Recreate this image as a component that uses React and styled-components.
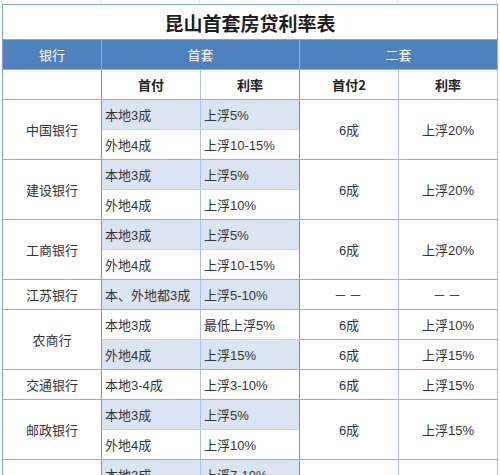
import React from "react";
import styled, { createGlobalStyle } from "styled-components";

const banks = [
  {
    name: "中国银行",
    rows: [
      { pay: "本地3成", rate: "上浮5%", shade: true },
      { pay: "外地4成", rate: "上浮10-15%" },
    ],
    pay2: "6成",
    rate2: "上浮20%",
  },
  {
    name: "建设银行",
    rows: [
      { pay: "本地3成", rate: "上浮5%", shade: true },
      { pay: "外地4成", rate: "上浮10%" },
    ],
    pay2: "6成",
    rate2: "上浮20%",
  },
  {
    name: "工商银行",
    rows: [
      { pay: "本地3成", rate: "上浮5%", shade: true },
      { pay: "外地4成", rate: "上浮10-15%" },
    ],
    pay2: "6成",
    rate2: "上浮20%",
  },
  {
    name: "江苏银行",
    rows: [{ pay: "本、外地都3成", rate: "上浮5-10%", shade: true }],
    pay2: "－－",
    rate2: "－－",
  },
  {
    name: "农商行",
    rows: [
      { pay: "本地3成", rate: "最低上浮5%", pay2: "6成", rate2: "上浮10%" },
      { pay: "外地4成", rate: "上浮15%", shade: true, pay2: "6成", rate2: "上浮15%" },
    ],
  },
  {
    name: "交通银行",
    rows: [{ pay: "本地3-4成", rate: "上浮3-10%" }],
    pay2: "6成",
    rate2: "上浮15%",
  },
  {
    name: "邮政银行",
    rows: [
      { pay: "本地3成", rate: "上浮5%", shade: true },
      { pay: "外地4成", rate: "上浮10%" },
    ],
    pay2: "6成",
    rate2: "上浮15%",
  },
  {
    // last group runs off the bottom of the view
    name: "",
    rows: [
      { pay: "本地3成", rate: "上浮7-10%", shade: true },
      { pay: "外地4成", rate: "上浮10%" },
    ],
    pay2: "",
    rate2: "",
  },
];

const GlobalStyle = createGlobalStyle`
  html, body {
    margin: 0;
    padding: 0;
    background: #ffffff;
    overflow: hidden;
  }
  body {
    font-family: "Liberation Sans", "Noto Sans CJK SC", sans-serif;
    color: #333;
  }
`;

const Page = styled.div`
  width: 500px;
  height: 475px;
  overflow: hidden;
  display: flex;
  flex-direction: column;
`;

const TopStrip = styled.div`
  height: 4px;
  flex: none;
  display: grid;
  grid-template-columns: 2px repeat(5, 99px) 1fr;
  & > span {
    border-right: 1px solid #e2e2e2;
  }
`;

const Table = styled.table`
  flex: none;
  margin-left: 2px;
  width: 496px;
  border-collapse: collapse;
  table-layout: fixed;
  border: 1px solid #7fa3d4;
`;

const TitleCell = styled.th`
  height: 34px;
  padding: 0;
  font-family: "Noto Sans CJK SC", sans-serif;
  font-size: 19px;
  font-weight: bold;
  color: #1e1e1e;
  text-align: center;
  border-bottom: 1px solid #7fa3d4;
`;

const HeadCell = styled.th`
  height: 29px;
  padding: 0;
  background: #4f81bd;
  color: #ffffff;
  font-family: "Noto Sans CJK SC", sans-serif;
  font-size: 13px;
  font-weight: normal;
  text-align: center;
  border-right: 1px solid #8fb0dc;
  border-bottom: 1px solid #8fb0dc;
`;

const SubCell = styled.th`
  height: 29px;
  padding: 0;
  background: #ffffff;
  color: #222;
  font-family: "Noto Sans CJK SC", sans-serif;
  font-size: 13px;
  font-weight: bold;
  text-align: center;
  border-right: 1px solid ${(p) => (p.$strong ? "#6e96cc" : "#a9c2e4")};
  border-bottom: 1px solid #8fb0dc;
`;

const Cell = styled.td`
  height: 29px;
  padding: 0 ${(p) => (p.$left ? "3px" : "0")};
  background: ${(p) => (p.$shade ? "#dbe5f1" : "#ffffff")};
  font-family: "Liberation Sans", "Noto Sans CJK SC", sans-serif;
  font-size: 13px;
  color: #333;
  text-align: ${(p) => (p.$left ? "left" : "center")};
  white-space: nowrap;
  overflow: hidden;
  border-right: 1px solid ${(p) => (p.$strong ? "#6e96cc" : "#a9c2e4")};
  border-bottom: 1px solid ${(p) => (p.$inner ? "#c3d4ea" : "#8fb0dc")};
`;

const Dash = styled.span`
  letter-spacing: 2px;
  color: #444;
`;

const show = (v) => (v === "－－" ? <Dash>{v}</Dash> : v);

export default function App() {
  return (
    <Page>
      <GlobalStyle />
      <TopStrip>
        <span />
        <span />
        <span />
        <span />
        <span />
        <span />
      </TopStrip>
      <Table>
        <colgroup>
          <col style={{ width: "99px" }} />
          <col style={{ width: "99px" }} />
          <col style={{ width: "99px" }} />
          <col style={{ width: "99px" }} />
          <col />
        </colgroup>
        <thead>
          <tr>
            <TitleCell colSpan={5}>昆山首套房贷利率表</TitleCell>
          </tr>
          <tr>
            <HeadCell>银行</HeadCell>
            <HeadCell colSpan={2}>首套</HeadCell>
            <HeadCell colSpan={2}>二套</HeadCell>
          </tr>
          <tr>
            <SubCell $strong />
            <SubCell>首付</SubCell>
            <SubCell $strong>利率</SubCell>
            <SubCell>首付2</SubCell>
            <SubCell>利率</SubCell>
          </tr>
        </thead>
        <tbody>
          {banks.map((bank, b) =>
            bank.rows.map((row, i) => {
              const last = i === bank.rows.length - 1;
              const merged = bank.pay2 !== undefined;
              return (
                <tr key={b + "-" + i}>
                  {i === 0 && (
                    <Cell rowSpan={bank.rows.length} $strong>
                      {bank.name}
                    </Cell>
                  )}
                  <Cell $left $shade={row.shade} $inner={!last}>
                    {row.pay}
                  </Cell>
                  <Cell $left $shade={row.shade} $inner={!last} $strong>
                    {row.rate}
                  </Cell>
                  {merged ? (
                    i === 0 && (
                      <>
                        <Cell rowSpan={bank.rows.length}>{show(bank.pay2)}</Cell>
                        <Cell rowSpan={bank.rows.length}>{show(bank.rate2)}</Cell>
                      </>
                    )
                  ) : (
                    <>
                      <Cell>{row.pay2}</Cell>
                      <Cell>{row.rate2}</Cell>
                    </>
                  )}
                </tr>
              );
            })
          )}
        </tbody>
      </Table>
    </Page>
  );
}
